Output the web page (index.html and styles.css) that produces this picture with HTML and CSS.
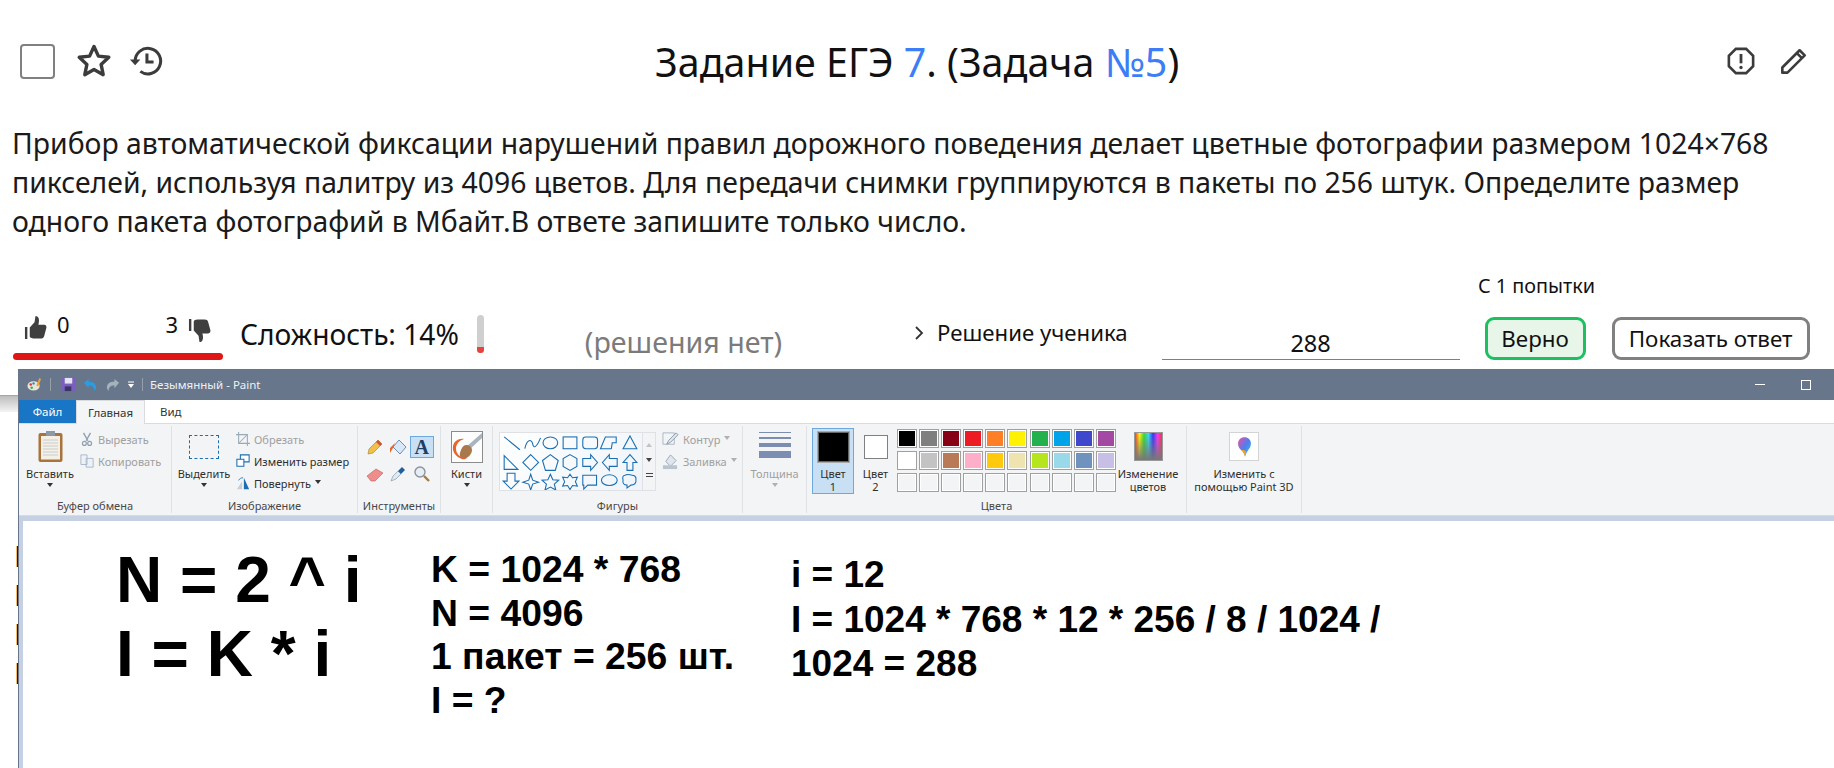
FILE: index.html
```html
<!DOCTYPE html>
<html lang="ru">
<head>
<meta charset="utf-8">
<title>Задание ЕГЭ 7</title>
<link rel="stylesheet" href="styles.css">
</head>
<body>
<header class="head">
  <div class="head-left">
    <span class="checkbox"></span>
    <svg class="ico star" viewBox="0 0 36 36"><path d="M18 3.500l4.400 9.600 10.400 1.200-7.700 7.100 2.100 10.300-9.200-5.200-9.200 5.200 2.100-10.300-7.700-7.100 10.400-1.200z" fill="none" stroke="#3c3c3c" stroke-width="3.400" stroke-linejoin="round"/></svg>
    <svg class="ico hist" viewBox="0 0 36 36"><path d="M6.500 18A13.500 13.500 0 1 1 12 29" fill="none" stroke="#3c3c3c" stroke-width="3.200"/><path d="M1 16.500h11l-5.500 6z" fill="#3c3c3c"/><path d="M19 10v9h7" fill="none" stroke="#3c3c3c" stroke-width="3.200"/></svg>
  </div>
  <h1 class="title">Задание ЕГЭ <a class="lnk">7</a>. (Задача <a class="lnk">№5</a>)</h1>
  <div class="head-right">
    <svg class="ico warn" viewBox="0 0 30 30"><path d="M9.500 2h11L28 9.500v11L20.500 28h-11L2 20.500v-11z" fill="none" stroke="#3c3c3c" stroke-width="2.800"/><path d="M15 7.500v10" stroke="#3c3c3c" stroke-width="3"/><circle cx="15" cy="22" r="1.800" fill="#3c3c3c"/></svg>
    <svg class="ico pen" viewBox="0 0 30 30"><path d="M2.500 22L21 3.500l5.500 5.500L8 27.500H2.500zM18 6.500l5.500 5.500" fill="none" stroke="#3c3c3c" stroke-width="2.800" stroke-linejoin="round"/></svg>
  </div>
</header>

<p class="task">Прибор автоматической фиксации нарушений правил дорожного поведения делает цветные фотографии размером 1024×768 пикселей, используя палитру из 4096 цветов. Для передачи снимки группируются в пакеты по 256 штук. Определите размер одного пакета фотографий в Мбайт.В ответе запишите только число.</p>

<div class="attempt-row"><span class="attempt">С 1 попытки</span></div>

<section class="controls">
  <div class="votes">
    <div class="vote-line">
      <span class="vote">
        <svg class="thumb" viewBox="0 0 24 26"><path d="M1 12.500h2.500V25H1zM6 13l5-5.500L12 1c3.500 0 4.500 4 3 9h6c2 0 2.800 1.800 2.300 3.500L21 22c-.5 1.800-1.700 2.500-3.500 2.500H10c-2 0-4-1-4-2z" fill="#3f3f3f"/></svg>
        <span class="num">0</span>
      </span>
      <span class="vote">
        <span class="num">3</span>
        <svg class="thumb thumb-down" viewBox="0 0 24 26"><path d="M1 1h2.500v12.500H1zM6 13l5 5.500 1 6.500c3.500 0 4.500-4 3-9h6c2 0 2.800-1.800 2.300-3.500L21 4c-.5-1.800-1.700-2.500-3.500-2.500H10C8 1.500 6 2.500 6 3.500z" fill="#3f3f3f"/></svg>
      </span>
    </div>
    <div class="vote-bar"></div>
  </div>
  <div class="complexity">Сложность: 14%</div>
  <div class="gauge"><div class="gauge-fill"></div></div>
  <div class="no-solution">(решения нет)</div>
  <div class="student"><svg class="chev" viewBox="0 0 10 16"><path d="M2 2l6 6-6 6" fill="none" stroke="#333" stroke-width="1.800"/></svg>Решение ученика</div>
  <div class="answer">288</div>
  <button class="btn btn-ok">Верно</button>
  <button class="btn btn-show">Показать ответ</button>
</section>

<div class="bg-rule"></div>
<div class="bg-text"><span>П</span><span>Н</span><span>Ц</span><span>Е</span></div>

<figure class="paint">
  <div class="titlebar">
    <svg class="qa qa-first" viewBox="0 0 16 16"><ellipse cx="7" cy="9.500" rx="6.500" ry="5" fill="#e8e4da"/><circle cx="4" cy="8" r="1.300" fill="#d33"/><circle cx="7" cy="6.800" r="1.300" fill="#38c"/><circle cx="5" cy="11.500" r="1.300" fill="#4a4"/><path d="M10 9l3-8 2 1-3 8z" fill="#e9a33c"/></svg>
    <i class="sep"></i>
    <svg class="qa" viewBox="0 0 16 16"><path d="M1 1h14v14H1z" fill="#7a5fc0"/><path d="M4 1h8v6H4z" fill="#e6e4f2"/><path d="M4 10h7v5H4z" fill="#3c3560"/></svg>
    <svg class="qa" viewBox="0 0 16 16"><path d="M1 6l5-4v3c5 0 8 2 8 6 0 2-1 3-2 4 .5-4-2-6-6-6v3z" fill="#2e9be0"/></svg>
    <svg class="qa" viewBox="0 0 16 16"><path d="M15 6l-5-4v3c-5 0-8 2-8 6 0 2 1 3 2 4-.5-4 2-6 6-6v3z" fill="#a5b1bd"/></svg>
    <svg class="qa-drop" viewBox="0 0 8 8"><path d="M1 1h6" stroke="#fff" stroke-width="1"/><path d="M1 3h6L4 7z" fill="#fff"/></svg>
    <i class="sep"></i>
    <span class="win-title">Безымянный - Paint</span>
    <span class="win-btns">
      <i class="w-min"></i><i class="w-max"></i>
    </span>
  </div>
  <div class="tabs">
    <span class="tab tab-file">Файл</span>
    <span class="tab tab-on">Главная</span>
    <span class="tab">Вид</span>
  </div>
  <div class="ribbon">
    <div class="group g-clip">
      <div class="g-body">
        <div class="big">
          <svg class="ic-paste" viewBox="0 0 25 31"><rect x=".5" y="2" width="24" height="29" rx="2" fill="#a8743c"/><rect x="3" y="5" width="19" height="23.500" fill="#f4f0e6"/><path d="M5 9h15M5 12h15M5 15h15M5 18h15M5 21h15M5 24h15" stroke="#c8ccd2"/><rect x="8" y="0" width="9" height="5" fill="#8e99a6"/></svg>
          <span class="lbl">Вставить</span><b class="caret"></b>
        </div>
        <div class="small-col">
          <span class="si off"><svg viewBox="0 0 14 16"><path d="M3 1l5 9M11 1L6 10" stroke="#8fa0b2" stroke-width="1.600"/><circle cx="4" cy="13" r="2.200" fill="none" stroke="#8fa0b2" stroke-width="1.400"/><circle cx="10" cy="13" r="2.200" fill="none" stroke="#8fa0b2" stroke-width="1.400"/></svg>Вырезать</span>
          <span class="si off"><svg viewBox="0 0 16 16"><path d="M1 1h7v11H1zM7 5h8v10H7z" fill="#eef1f5" stroke="#a5b5c6"/></svg>Копировать</span>
        </div>
      </div>
      <div class="g-name">Буфер обмена</div>
    </div>
    <div class="group g-image">
      <div class="g-body">
        <div class="big">
          <span class="sel-ic"></span>
          <span class="lbl">Выделить</span><b class="caret"></b>
        </div>
        <div class="small-col">
          <span class="si off"><svg viewBox="0 0 16 16"><path d="M3 0v13h13M0 3h13v13M4 12L12 4" fill="none" stroke="#9aa9b8" stroke-width="1.200"/></svg>Обрезать</span>
          <span class="si"><svg viewBox="0 0 16 16"><path d="M5 1h10v8H5z" fill="#fff" stroke="#1b6eb0" stroke-width="1.200"/><path d="M1 6h8v8H1z" fill="#fff" stroke="#1b6eb0" stroke-width="1.200"/></svg>Изменить размер</span>
          <span class="si"><svg viewBox="0 0 16 16"><path d="M9 2v13h6z" fill="#1b6eb0"/><path d="M7 6v9H1z" fill="#c9ced4"/><path d="M3 5c1-2 3-3 5-3" fill="none" stroke="#1b6eb0"/></svg>Повернуть<b class="caret inl"></b></span>
        </div>
      </div>
      <div class="g-name">Изображение</div>
    </div>
    <div class="group g-tools">
      <div class="g-body">
        <div class="tool-grid">
          <span class="tool"><svg viewBox="0 0 18 18"><path d="M2 16l1-5L12 2l4 4-9 9z" fill="#f0c04c" stroke="#a97c20" stroke-width=".6"/><path d="M12 2l4 4-2 2-4-4z" fill="#d4513c"/></svg></span>
          <span class="tool"><svg viewBox="0 0 18 18"><path d="M10 2l7 7-6 7-7-7z" fill="#d9e8f6" stroke="#6c8fb3"/><path d="M6 5L1 10v5l3-5z" fill="#e8672c"/></svg></span>
          <span class="tool tool-on"><b class="a-ic">A</b></span>
          <span class="tool"><svg viewBox="0 0 18 18"><path d="M1 11l9-7 7 4-8 8H5z" fill="#ee8d8a" stroke="#b8605e" stroke-width=".6"/></svg></span>
          <span class="tool"><svg viewBox="0 0 18 18"><path d="M2 16l2-5 5-5 3 3-5 5z" fill="#dfe9f1" stroke="#7a8c9d" stroke-width=".6"/><path d="M9 6l4-4 3 3-4 4z" fill="#1f5f9e"/></svg></span>
          <span class="tool"><svg viewBox="0 0 18 18"><circle cx="7" cy="7" r="5" fill="#e6eef5" stroke="#8b949c" stroke-width="1.400"/><path d="M11 11l5 5" stroke="#a87a3e" stroke-width="2.400"/></svg></span>
        </div>
      </div>
      <div class="g-name">Инструменты</div>
    </div>
    <div class="group g-brush">
      <div class="g-body">
        <div class="big">
          <svg class="ic-brush" viewBox="0 0 32 32"><rect x=".5" y=".5" width="31" height="31" fill="#fdfdfd" stroke="#8c8c8c"/><path d="M31 2L15 16l3 3L31 7z" fill="#a9b4bf"/><path d="M15 14c3 0 6 2 6 5 0 4-4 8-8 9-3 0-5-2-4-6 1-4 3-8 6-8z" fill="#a9794d"/><path d="M13 8c-5-1-10 2-11 7-1 6 3 11 9 13 2 .5 4 0 5-.5-6 0-11-4-11-10 0-4 3-8 8-9.500z" fill="#e9642a"/></svg>
          <span class="lbl">Кисти</span><b class="caret"></b>
        </div>
      </div>
      <div class="g-name hid">.</div>
    </div>
    <div class="group g-shapes">
      <div class="g-body">
        <div class="gallery">
          <svg class="shapes" viewBox="0 0 142 58" fill="none" stroke="#1b6eb0" stroke-width="1.100">
            <path d="M3 4l16 13"/><path d="M24 16c2-10 7-10 8-5s4 4 8-6"/>
            <ellipse cx="50" cy="10" rx="7.500" ry="6"/>
            <rect x="63" y="4" width="14" height="12"/><rect x="83" y="4" width="15" height="12" rx="3"/>
            <path d="M106 4h11v6h-4l-1 6h-11z"/><path d="M131 3l7 13h-14z"/>
            <path d="M3 23l14 14H3z"/><path d="M30 22l8 8-8 8-8-8z"/><path d="M50 22l8 6-3 10H45l-3-10z"/>
            <path d="M70 22l7 4v8l-7 4-7-4v-8z"/><path d="M83 26h8v-4l7 8-7 8v-4h-8z"/><path d="M118 26h-8v-4l-7 8 7 8v-4h8z"/><path d="M131 22l7 8h-4v8h-6v-8h-4z"/>
            <path d="M6 41h8v8h4l-8 8-8-8h4z"/><path d="M30 42l2 6 6 2-6 2-2 6-2-6-6-2 6-2z"/><path d="M50 42l2.500 5.500 6 .5-4.500 4 1.500 6-5.500-3-5.500 3 1.500-6-4.500-4 6-.5z"/>
            <path d="M70 42l2.500 3.500 5-.5-2 4.500 2 4.500-5-.5-2.500 4-2.500-4-5 .5 2-4.500-2-4.500 5 .5z"/>
            <path d="M83 43h14v10h-9l-4 4v-4h-1z"/><ellipse cx="110" cy="48" rx="8" ry="5.500"/><path d="M126 43c3-2 5 0 7 0s5 1 4 5c1 3-2 5-5 5l-4 3v-3c-3 0-5-2-4-5-1-3 0-5 2-5z"/>
          </svg>
          <div class="gal-side"><b class="up"></b><b class="dn"></b><b class="more"></b></div>
        </div>
        <div class="small-col narrow">
          <span class="si off2"><svg viewBox="0 0 18 18"><path d="M1 2h12v12H1z" fill="#f2f4f7" stroke="#aab6c2"/><path d="M5 14l2-4 8-8 2 2-8 8z" fill="#dfe6ee" stroke="#8c9aa8"/></svg>Контур<b class="caret inl pale"></b></span>
          <span class="si off2"><svg viewBox="0 0 18 18"><path d="M9 2l6 6-6 6-5-5z" fill="#dfe6ee" stroke="#9aa8b6"/><path d="M1 13h15v4H1z" fill="#b9c4cf"/></svg>Заливка<b class="caret inl pale"></b></span>
        </div>
      </div>
      <div class="g-name">Фигуры</div>
    </div>
    <div class="group g-size">
      <div class="g-body">
        <div class="big off">
          <span class="size-ic"><i class="s1"></i><i class="s2"></i><i class="s3"></i><i class="s4"></i></span>
          <span class="lbl">Толщина</span><b class="caret pale"></b>
        </div>
      </div>
      <div class="g-name hid">.</div>
    </div>
    <div class="group g-colors">
      <div class="g-body">
        <div class="col-btn col-on"><span class="swatch big-sw"></span><span class="lbl">Цвет<br>1</span></div>
        <div class="col-btn"><span class="swatch sm-sw"></span><span class="lbl">Цвет<br>2</span></div>
        <div class="palette">
          <i class="c c1"></i><i class="c c2"></i><i class="c c3"></i><i class="c c4"></i><i class="c c5"></i><i class="c c6"></i><i class="c c7"></i><i class="c c8"></i><i class="c c9"></i><i class="c c10"></i>
          <i class="c c11"></i><i class="c c12"></i><i class="c c13"></i><i class="c c14"></i><i class="c c15"></i><i class="c c16"></i><i class="c c17"></i><i class="c c18"></i><i class="c c19"></i><i class="c c20"></i>
          <i class="c"></i><i class="c"></i><i class="c"></i><i class="c"></i><i class="c"></i><i class="c"></i><i class="c"></i><i class="c"></i><i class="c"></i><i class="c"></i>
        </div>
        <div class="big edit">
          <span class="rainbow"></span>
          <span class="lbl">Изменение<br>цветов</span>
        </div>
      </div>
      <div class="g-name">Цвета</div>
    </div>
    <div class="group g-3d">
      <div class="g-body">
        <div class="big">
          <span class="p3d"><svg viewBox="0 0 28 40"><defs><linearGradient id="g3" x1="0" y1="0" x2="1" y2="1"><stop offset="0" stop-color="#ef4fa0"/><stop offset=".5" stop-color="#4e7ff0"/><stop offset="1" stop-color="#33c3e0"/></linearGradient></defs><path d="M14 2c7 0 12 5 12 12 0 8-8 13-11 24-1-6-4-10-8-13-3-3-5-6-5-11C2 7 7 2 14 2z" fill="url(#g3)"/><path d="M15 38c-1-6-4-10-7-12 3-1 8 0 9 3z" fill="#f4a21e"/></svg></span>
          <span class="lbl">Изменить с<br>помощью Paint 3D</span>
        </div>
      </div>
      <div class="g-name hid">.</div>
    </div>
  </div>
  <div class="canvas-wrap">
    <div class="canvas">
      <div class="c-col c-a"><div>N = 2 ^ i</div><div>I = K * i</div></div>
      <div class="c-col c-b"><div>K = 1024 * 768</div><div>N = 4096</div><div>1 пакет = 256 шт.</div><div>I = ?</div></div>
      <div class="c-col c-c"><div>i = 12</div><div>I = 1024 * 768 * 12 * 256 / 8 / 1024 /</div><div>1024 = 288</div></div>
    </div>
  </div>
</figure>
</body>
</html>
```
FILE: styles.css
```css
* { box-sizing: border-box; }
html, body { margin: 0; padding: 0; }
body { width: 1834px; height: 768px; overflow: hidden; background: #fff; color: #111; font-family: "Noto Sans", sans-serif; position: relative; }

.head { display: flex; align-items: center; justify-content: space-between; height: 62px; margin-top: 30px; padding: 0 26px 0 20px; position: relative; }
.head-left, .head-right { display: flex; align-items: center; }
.checkbox { width: 35px; height: 35px; border: 2px solid #808080; border-radius: 4px; }
.ico { display: block; }
.star { width: 36px; height: 36px; margin-left: 21px; }
.hist { width: 34px; height: 34px; margin-left: 17px; }
.warn { width: 28px; height: 28px; }
.pen { width: 28px; height: 28px; margin-left: 25px; }
.title { margin: 0; font-size: 39.400px; font-weight: 400; position: absolute; left: 655px; top: 9px; line-height: 46px; white-space: nowrap; color: #111; }
.lnk { color: #3d7df5; }

.task { margin: 32px 0 0; padding: 0 12px; font-size: 28.360px; line-height: 39px; width: 1790px; color: #1a1a1a; }

.attempt-row { height: 24px; margin-top: 33px; padding-left: 1478px; }
.attempt { font-size: 19.800px; line-height: 24px; white-space: nowrap; }

.controls { display: flex; height: 56px; position: relative; margin-top: 6px; }
.votes { width: 210px; margin-left: 13px; flex: none; }
.vote-line { display: flex; justify-content: space-between; padding: 7px 12px 0 11px; height: 49px; }
.vote { display: flex; align-items: flex-start; gap: 10px; }
.thumb { width: 23px; height: 25px; margin-top: 4px; }
.thumb-down { margin-top: 7px; }
.num { font-size: 22px; line-height: 26px; }
.vote-bar { height: 7px; background: #e01616; border-radius: 4px; }
.complexity { font-size: 28.200px; margin-left: 17px; line-height: 36px; margin-top: 12px; white-space: nowrap; }
.gauge { width: 7px; height: 38px; background: #cfcfcf; border-radius: 4px; overflow: hidden; margin: 11px 0 0 18px; display: flex; align-items: flex-end; }
.gauge-fill { width: 100%; height: 6px; background: #e6433f; }
.no-solution { font-size: 28.600px; color: #7b7b7b; margin-left: 101px; line-height: 36px; margin-top: 20px; white-space: nowrap; }
.student { font-size: 22.200px; margin-left: 132px; margin-top: 14px; line-height: 30px; height: 30px; display: flex; align-items: center; white-space: nowrap; }
.chev { width: 10px; height: 16px; margin-right: 13px; }
.answer { width: 298px; height: 56px; margin: 0 0 0 34px; border-bottom: 1px solid #808080; font-size: 23.500px; text-align: center; padding-top: 24px; line-height: 30px; }
.btn { font-family: inherit; font-size: 22.400px; height: 43px; background: #fff; border-radius: 9px; padding: 0; margin-top: 13px; color: #111; white-space: nowrap; }
.btn-ok { width: 101px; margin-left: 25px; border: 3px solid #1dbf60; background: #e8f5e9; }
.btn-show { width: 198px; margin-left: 26px; border: 3px solid #808080; }

.bg-rule { position: absolute; left: 0; top: 395px; width: 18px; height: 17px; background: linear-gradient(#8d8d8d 0, #bdbdbd 1px, #f4f4f4 100%); }
.bg-text { position: absolute; left: 14px; top: 537px; display: flex; flex-direction: column; font-size: 28.360px; line-height: 39px; white-space: nowrap; }

.paint { position: absolute; left: 18px; top: 369px; right: 0; bottom: 0; margin: 0; background: #fff; border-left: 1px solid #67768a; font-family: "Noto Sans", sans-serif; overflow: hidden; }
.titlebar { height: 31px; background: #67768a; display: flex; align-items: center; padding-left: 8px; color: #fff; }
.qa { width: 15px; height: 15px; margin-right: 7px; display: block; }
.qa-first { margin-right: 8px; }
.qa-drop { width: 8px; height: 8px; margin-right: 7px; }
.sep { width: 1px; height: 13px; background: #94a0ae; margin-right: 10px; display: block; }
.qa-drop + .sep { margin-right: 7px; }
.win-title { font-size: 11.500px; color: #eef1f4; }
.win-btns { margin-left: auto; display: flex; align-items: center; gap: 36px; padding-right: 23px; }
.w-min { width: 10px; height: 1px; background: #fff; display: block; }
.w-max { width: 10px; height: 10px; border: 1px solid #fff; display: block; }
.tabs { height: 24px; display: flex; background: #fff; font-size: 11.500px; line-height: 24px; border-bottom: 1px solid #dadbdc; color: #333; }
.tab { padding: 0 15px; }
.tab-file { background: #1976c7; color: #fff; width: 57px; padding: 0; text-align: center; }
.tab-on { width: 69px; padding: 0; text-align: center; background: #f4f5f7; border: 1px solid #dadbdc; border-bottom: 0; height: 24px; }
.ribbon { display: flex; height: 92px; background: #f3f4f6; border-bottom: 1px solid #dadbdc; font-size: 11px; color: #2f2f2f; }
.group { display: flex; flex-direction: column; border-right: 1px solid #e0e1e3; margin: 2px 0; flex: none; }
.g-body { flex: 1; display: flex; min-height: 0; }
.g-name { height: 14px; line-height: 14px; text-align: center; font-size: 11px; color: #484848; white-space: nowrap; }
.hid { visibility: hidden; }
.big { display: flex; flex-direction: column; align-items: center; text-align: center; flex: none; }
.lbl { line-height: 13px; white-space: nowrap; }
.caret { display: block; width: 0; height: 0; border: 3px solid transparent; border-top: 4px solid #333; border-bottom: 0; margin-top: 3px; }
.caret.inl { display: inline-block; margin: 0 0 3px 4px; }
.caret.pale { border-top-color: #b0b0b0; }
.small-col { display: flex; flex-direction: column; gap: 4px; padding-top: 4px; }
.si { display: flex; align-items: center; height: 18px; white-space: nowrap; }
.si svg { width: 14px; height: 14px; margin-right: 4px; flex: none; }
.off, .off2 { color: #a0a0a0; }
.narrow { margin-left: 6px; }
.narrow .si svg { width: 17px; height: 17px; }

.g-clip { width: 153px; }
.g-clip .big { margin: 0 0 0 7px; width: 48px; padding-top: 5px; }
.ic-paste { width: 25px; height: 31px; margin-bottom: 5px; }
.g-clip .small-col { margin-left: 6px; }
.g-image { width: 186px; }
.g-image .big { margin-left: 7px; width: 50px; padding-top: 9px; }
.sel-ic { display: block; width: 30px; height: 24px; border: 1px dashed #1b6eb0; margin-bottom: 8px; }
.g-image .small-col { margin-left: 7px; }
.g-tools { width: 83px; }
.tool-grid { display: grid; grid-template-columns: repeat(3, 23.500px); grid-auto-rows: 22px; gap: 5px 0; margin: 10px 0 0 5px; height: 49px; }
.tool { display: flex; align-items: center; justify-content: center; }
.tool svg { width: 18px; height: 18px; }
.tool-on { background: #c9dff3; border: 1px solid #6da9df; }
.a-ic { font-family: "Liberation Serif", serif; font-size: 20px; color: #1e3f66; line-height: 20px; }
.g-brush { width: 52px; }
.g-brush .big { width: 100%; padding-top: 5px; }
.ic-brush { width: 32px; height: 32px; margin-bottom: 4px; }
.g-shapes { width: 250px; }
.gallery { display: flex; width: 157px; height: 59px; margin: 6px 0 0 6px; background: #fff; border: 1px solid #dfe1e4; flex: none; }
.shapes { width: 142px; height: 57px; background: linear-gradient(135deg, #fff, #eef4fa); display: block; }
.gal-side { flex: 1; display: flex; flex-direction: column; align-items: center; justify-content: space-around; background: #f3f4f6; border-left: 1px solid #dfe1e4; padding: 4px 0; }
.up { width: 0; height: 0; border: 3px solid transparent; border-bottom: 4px solid #c0c4c8; border-top: 0; }
.dn { width: 0; height: 0; border: 3px solid transparent; border-top: 4px solid #444; border-bottom: 0; }
.more { width: 7px; height: 7px; background: linear-gradient(#444 0 1px, transparent 1px 3px, #444 3px 4px, transparent 4px); }
.g-size { width: 64px; }
.g-size .big { width: 100%; padding-top: 6px; }
.size-ic { display: flex; flex-direction: column; align-items: center; gap: 4px; width: 32px; height: 27px; margin-bottom: 8px; }
.size-ic i { display: block; width: 32px; background: #7b8db0; }
.s1 { height: 1px; }
.s2 { height: 2px; }
.s3 { height: 4px; }
.s4 { height: 7px; }
.g-colors { width: 380px; }
.col-btn { width: 43px; height: 66px; display: flex; flex-direction: column; align-items: center; margin-top: 2px; text-align: center; flex: none; }
.col-on { width: 42px; background: #c9dff3; border: 1px solid #6da9df; margin-left: 5px; }
.swatch { display: block; flex: none; }
.big-sw { width: 31px; height: 30px; border: 1px solid #666; outline: 1px solid #aaa; background: #000; margin-top: 3px; margin-bottom: 5px; }
.sm-sw { width: 24px; height: 24px; background: #fff; border: 1px solid #808080; margin-top: 7px; margin-bottom: 8px; }
.palette { display: grid; grid-template-columns: repeat(10, 20px); grid-auto-rows: 19px; gap: 3px 2.100px; margin: 3px 0 0 0; height: 63px; width: 219px; flex: none; }
.c { display: block; border: 1px solid #a0a0a0; box-shadow: inset 0 0 0 1px #fff; background-color: #f3f4f6; }
.c1 { background-color: #000; } .c2 { background-color: #7f7f7f; } .c3 { background-color: #880015; } .c4 { background-color: #ed1c24; } .c5 { background-color: #ff7f27; }
.c6 { background-color: #fff200; } .c7 { background-color: #22b14c; } .c8 { background-color: #00a2e8; } .c9 { background-color: #3f48cc; } .c10 { background-color: #a349a4; }
.c11 { background-color: #fff; } .c12 { background-color: #c3c3c3; } .c13 { background-color: #b97a57; } .c14 { background-color: #ffaec9; } .c15 { background-color: #ffc90e; }
.c16 { background-color: #efe4b0; } .c17 { background-color: #b5e61d; } .c18 { background-color: #99d9ea; } .c19 { background-color: #7092be; } .c20 { background-color: #c8bfe7; }
.edit { margin-left: 0; padding-top: 6px; width: 64px; }
.rainbow { display: block; width: 29px; height: 29px; margin-bottom: 6px; border: 1px solid #999; background: linear-gradient(transparent, #777), linear-gradient(90deg, #f33, #ff0, #3d3, #3df, #33f, #f3f, #f33); }
.g-3d { width: 115px; }
.g-3d .big { width: 100%; padding-top: 6px; }
.p3d { display: flex; align-items: center; justify-content: center; width: 30px; height: 29px; background: #fff; border: 1px solid #d4d4d4; margin-bottom: 6px; }
.p3d svg { width: 15px; height: 24px; }

.canvas-wrap { height: calc(100% - 147px); background: #c5d0e2; padding: 5px 0 0 4px; }
.canvas { background: #fff; height: 100%; display: flex; font-family: "Liberation Sans", sans-serif; font-weight: 700; color: #000; }
.c-col { white-space: nowrap; }
.c-a { font-size: 64px; line-height: 74px; margin: 22px 0 0 93px; width: 315px; flex: none; }
.c-b { font-size: 37.300px; line-height: 43.600px; margin: 27px 0 0 0; width: 360px; flex: none; }
.c-c { font-size: 37px; line-height: 44.500px; margin: 32px 0 0 0; }
```
